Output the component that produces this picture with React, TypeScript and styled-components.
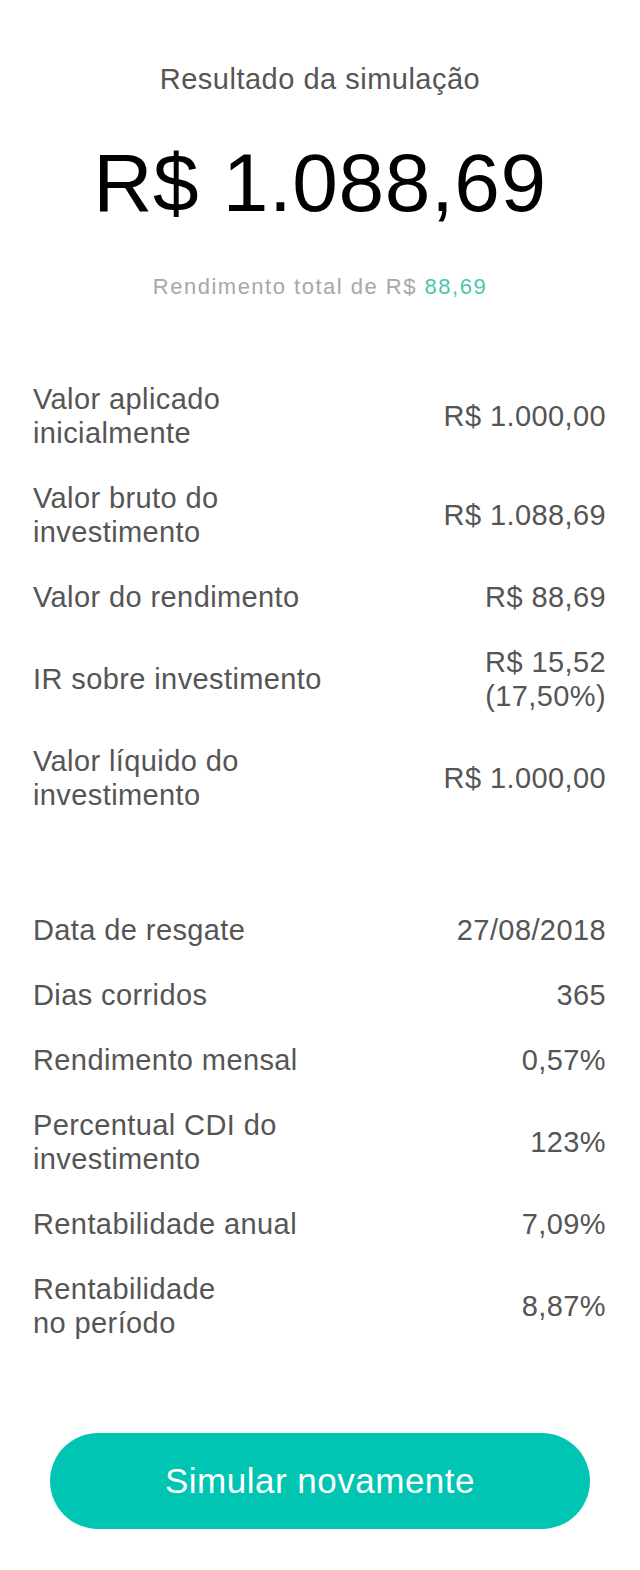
import React from "react";
import styled, { createGlobalStyle } from "styled-components";

const GlobalStyle = createGlobalStyle`
  html, body {
    margin: 0;
    padding: 0;
    background: #ffffff;
  }
  body {
    font-family: "Liberation Sans", Arial, Helvetica, sans-serif;
    -webkit-font-smoothing: antialiased;
  }
  * { box-sizing: border-box; }
`;

const Page = styled.main`
  width: 640px;
  min-height: 1570px;
  display: flex;
  flex-direction: column;
  padding: 62px 0 42px;
  background: #ffffff;
`;

const Header = styled.header`
  display: flex;
  flex-direction: column;
  align-items: center;
`;

const Title = styled.h1`
  margin: 0;
  font-size: 29px;
  line-height: 34px;
  font-weight: 400;
  letter-spacing: 0.5px;
  color: #555555;
`;

const Amount = styled.div`
  margin-top: 39px;
  font-size: 82px;
  line-height: 96px;
  font-weight: 400;
  letter-spacing: 0.6px;
  color: #000000;
`;

const Subtitle = styled.p`
  margin: 42px 0 0;
  font-size: 22px;
  line-height: 27px;
  letter-spacing: 1.5px;
  color: #a8a8a8;
`;

const Highlight = styled.span`
  color: #4cc6ae;
`;

const Section = styled.section<{ $top: number }>`
  display: flex;
  flex-direction: column;
  gap: 31px;
  margin-top: ${(p) => p.$top}px;
  padding: 0 34px 0 33px;
`;

const Row = styled.div`
  display: flex;
  align-items: center;
  justify-content: space-between;
  gap: 20px;
`;

const Label = styled.span`
  font-size: 29px;
  line-height: 34px;
  letter-spacing: 0.4px;
  color: #555555;
  white-space: pre-line;
`;

const Value = styled.span`
  font-size: 29px;
  line-height: 34px;
  letter-spacing: 0.4px;
  color: #555555;
  text-align: right;
  white-space: pre-line;
`;

const Button = styled.button`
  margin: 93px 50px 0 50px;
  height: 96px;
  border: none;
  border-radius: 48px;
  background: #00c5b2;
  color: #ffffff;
  font-family: "Liberation Sans", Arial, Helvetica, sans-serif;
  font-size: 35px;
  font-weight: 400;
  letter-spacing: 0.5px;
  cursor: pointer;
`;

type Item = { label: string; value: string };

const first: Item[] = [
  { label: "Valor aplicado\ninicialmente", value: "R$ 1.000,00" },
  { label: "Valor bruto do\ninvestimento", value: "R$ 1.088,69" },
  { label: "Valor do rendimento", value: "R$ 88,69" },
  { label: "IR sobre investimento", value: "R$ 15,52\n(17,50%)" },
  { label: "Valor líquido do\ninvestimento", value: "R$ 1.000,00" },
];

const second: Item[] = [
  { label: "Data de resgate", value: "27/08/2018" },
  { label: "Dias corridos", value: "365" },
  { label: "Rendimento mensal", value: "0,57%" },
  { label: "Percentual CDI do\ninvestimento", value: "123%" },
  { label: "Rentabilidade anual", value: "7,09%" },
  { label: "Rentabilidade\nno período", value: "8,87%" },
];

const Rows = ({ items }: { items: Item[] }) => (
  <>
    {items.map((it) => (
      <Row key={it.label}>
        <Label>{it.label}</Label>
        <Value>{it.value}</Value>
      </Row>
    ))}
  </>
);

export default function App() {
  return (
    <>
      <GlobalStyle />
      <Page>
        <Header>
          <Title>Resultado da simulação</Title>
          <Amount>R$ 1.088,69</Amount>
          <Subtitle>
            Rendimento total de R$ <Highlight>88,69</Highlight>
          </Subtitle>
        </Header>
        <Section $top={82}>
          <Rows items={first} />
        </Section>
        <Section $top={101}>
          <Rows items={second} />
        </Section>
        <Button>Simular novamente</Button>
      </Page>
    </>
  );
}
